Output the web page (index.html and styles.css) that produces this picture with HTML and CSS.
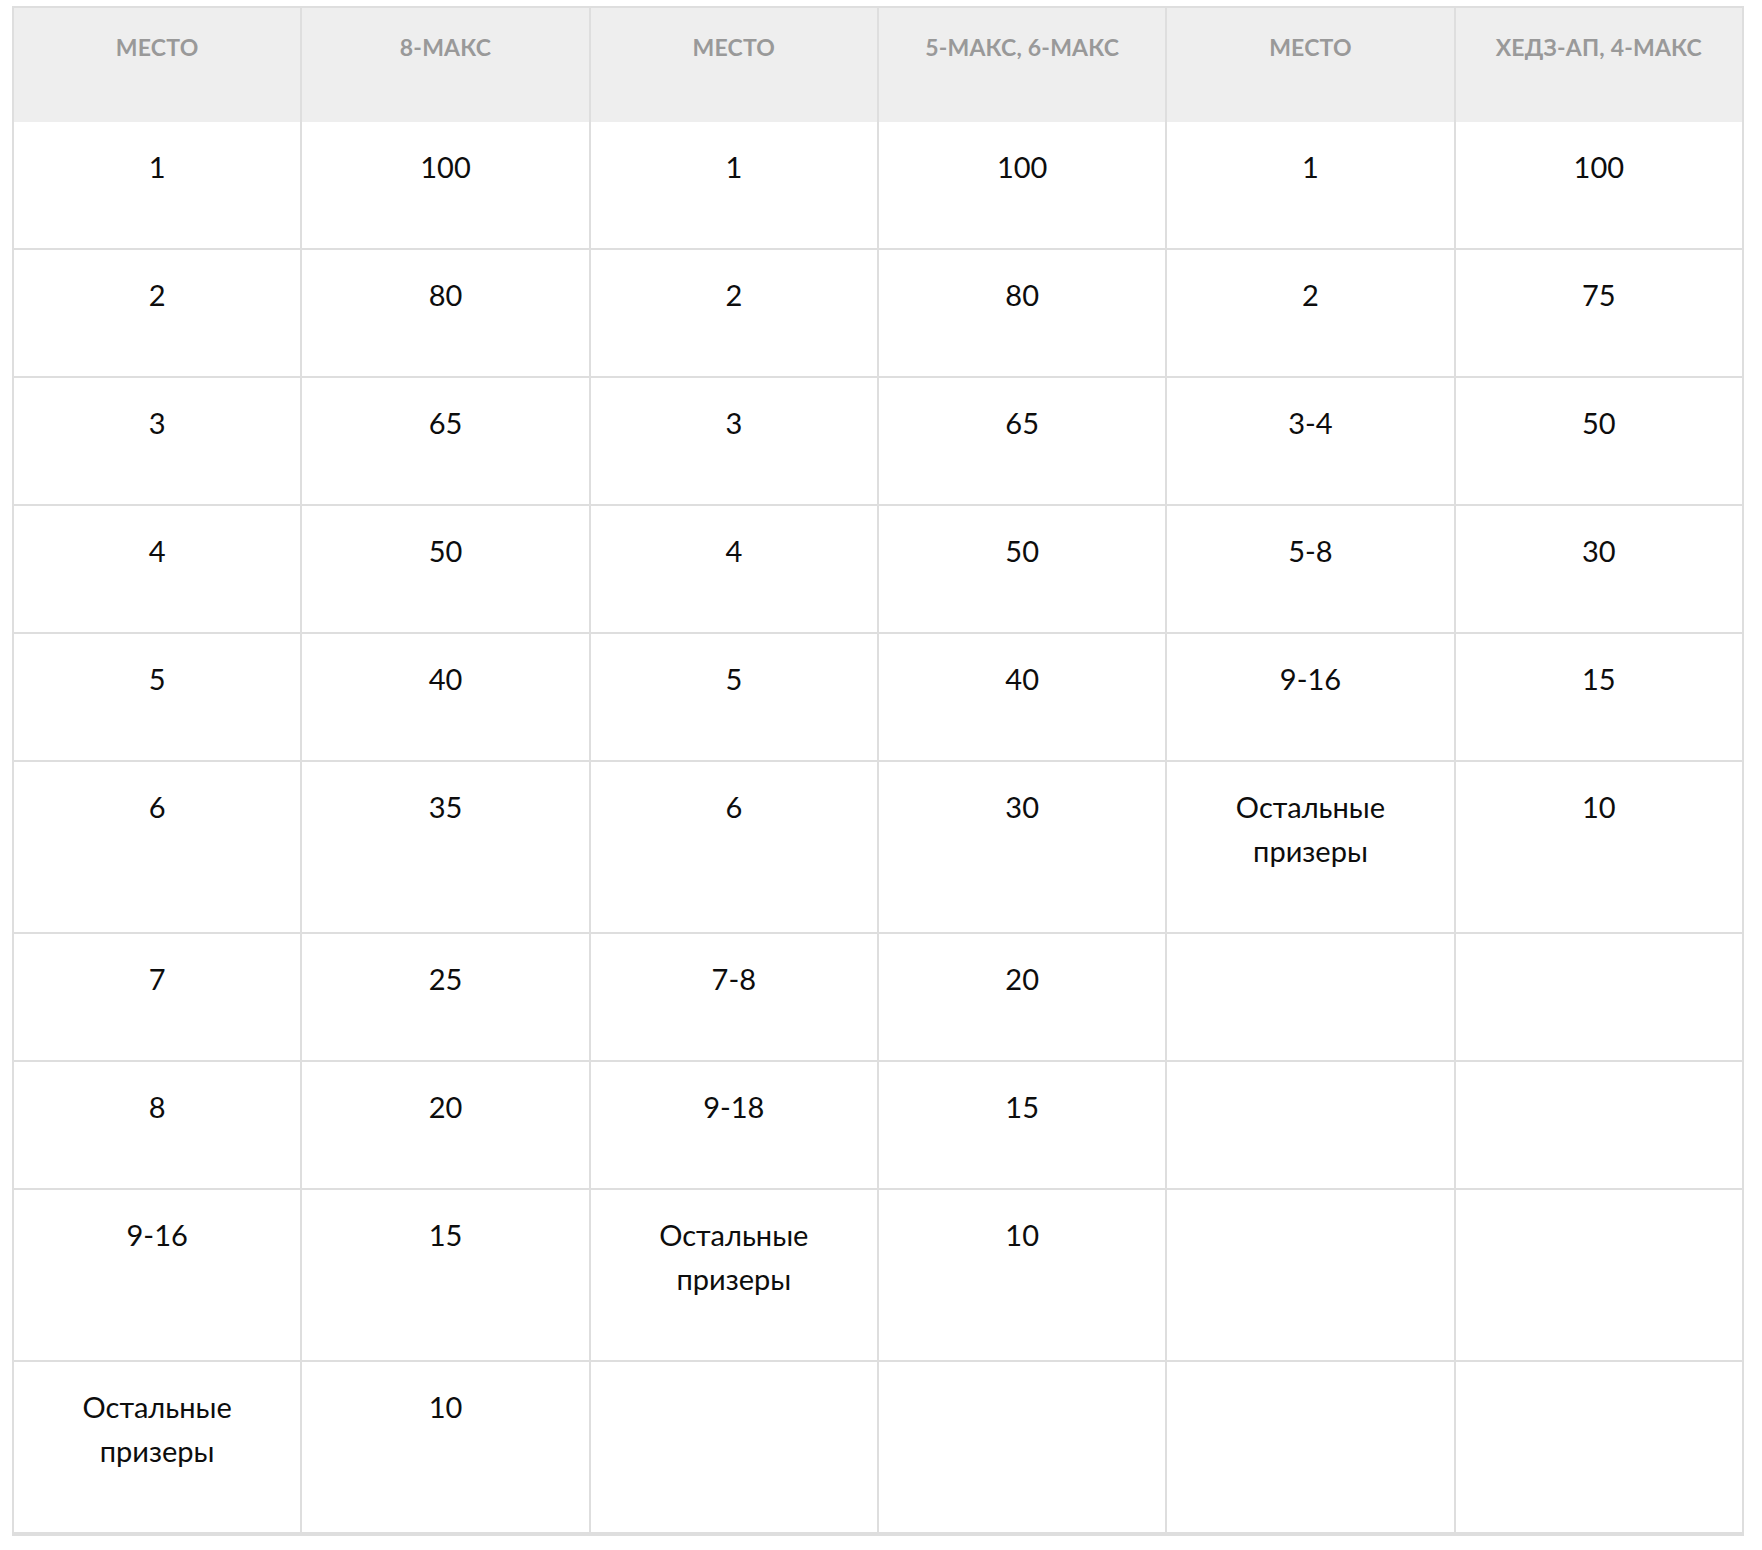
FILE: index.html
```html
<!DOCTYPE html>
<html lang="ru">
<head>
<meta charset="utf-8">
<title>Очки</title>
<link rel="stylesheet" href="styles.css">
</head>
<body>
<div class="wrap">
<table class="points">
  <colgroup>
    <col><col><col><col><col><col>
  </colgroup>
  <thead>
    <tr>
      <th>Место</th><th>8-макс</th><th>Место</th><th>5-макс, 6-макс</th><th>Место</th><th>Хедз-ап, 4-макс</th>
    </tr>
  </thead>
  <tbody>
    <tr><td>1</td><td>100</td><td>1</td><td>100</td><td>1</td><td>100</td></tr>
    <tr><td>2</td><td>80</td><td>2</td><td>80</td><td>2</td><td>75</td></tr>
    <tr><td>3</td><td>65</td><td>3</td><td>65</td><td>3-4</td><td>50</td></tr>
    <tr><td>4</td><td>50</td><td>4</td><td>50</td><td>5-8</td><td>30</td></tr>
    <tr><td>5</td><td>40</td><td>5</td><td>40</td><td>9-16</td><td>15</td></tr>
    <tr><td>6</td><td>35</td><td>6</td><td>30</td><td>Остальные<br>призеры</td><td>10</td></tr>
    <tr><td>7</td><td>25</td><td>7-8</td><td>20</td><td></td><td></td></tr>
    <tr><td>8</td><td>20</td><td>9-18</td><td>15</td><td></td><td></td></tr>
    <tr><td>9-16</td><td>15</td><td>Остальные<br>призеры</td><td>10</td><td></td><td></td></tr>
    <tr><td>Остальные<br>призеры</td><td>10</td><td></td><td></td><td></td><td></td></tr>
  </tbody>
</table>
</div>
</body>
</html>
```

FILE: styles.css
```css
html, body {
  margin: 0;
  padding: 0;
  background: #ffffff;
}

.wrap {
  padding: 6px 18px 14px 12px;
}

.points {
  width: 1732px;
  table-layout: fixed;
  border-collapse: separate;
  border-spacing: 0;
  border-left: 2px solid #dedede;
  border-top: 2px solid #dedede;
  border-bottom: 2px solid #dedede;
  font-family: Lato, "Noto Sans", sans-serif;
}

.points th,
.points td {
  border-right: 2px solid #dedede;
  text-align: center;
  vertical-align: top;
  box-sizing: border-box;
}

.points th {
  background: #eeeeee;
  color: #999999;
  font-weight: 700;
  font-size: 23px;
  line-height: 24px;
  text-transform: uppercase;
  letter-spacing: 0.2px;
  height: 114px;
  padding: 27px 6px 0;
}

.points td {
  border-bottom: 2px solid #dedede;
  color: #0d0d0d;
  font-weight: 400;
  font-size: 29px;
  line-height: 44px;
  padding: 23px 6px 59px;
}
```
